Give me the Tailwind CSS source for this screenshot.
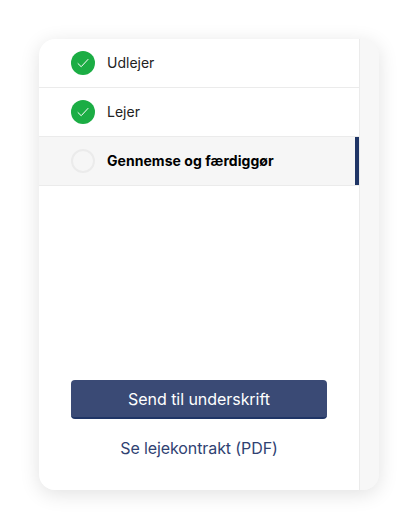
<!DOCTYPE html>
<html lang="en">
<head>
    <meta charset="UTF-8">
    <title>Lejekontrakt</title>
    <script src="https://cdn.jsdelivr.net/npm/@tailwindcss/browser@4"></script>
</head>
<body class="bg-white font-['Inter',sans-serif]">
    <div class="w-[418px] h-[529px] pt-[39px] pl-[39px]">
        <div class="w-[340px] h-[451px] flex rounded-[16px] overflow-hidden bg-[#f7f7f7] shadow-[0_4px_20px_rgba(0,0,0,0.12)]">
            <!-- Main panel -->
            <div class="w-[320px] h-full flex flex-col bg-white">
                <div class="h-[49px] flex items-center pl-[32px] gap-[12px] border-b border-[#ebebeb]">
                    <span class="w-[24px] h-[24px] rounded-full bg-[#1bad44] flex items-center justify-center">
                        <svg class="w-[14px] h-[14px]" viewBox="0 0 14 14" fill="none" stroke="#fff" stroke-width="1" stroke-linecap="round" stroke-linejoin="round"><path d="M2 7.6l3.2 3.1L12 3.4"/></svg>
                    </span>
                    <span class="text-[14px] leading-[20px] text-[#222]">Udlejer</span>
                </div>
                <div class="h-[49px] flex items-center pl-[32px] gap-[12px] border-b border-[#ebebeb]">
                    <span class="w-[24px] h-[24px] rounded-full bg-[#1bad44] flex items-center justify-center">
                        <svg class="w-[14px] h-[14px]" viewBox="0 0 14 14" fill="none" stroke="#fff" stroke-width="1" stroke-linecap="round" stroke-linejoin="round"><path d="M2 7.6l3.2 3.1L12 3.4"/></svg>
                    </span>
                    <span class="text-[14px] leading-[20px] text-[#222]">Lejer</span>
                </div>
                <div class="h-[49px] flex items-center pl-[32px] gap-[12px] border-b border-[#ebebeb] bg-[#f6f6f6] relative">
                    <span class="w-[24px] h-[24px] rounded-full border-2 border-[#ebebeb]"></span>
                    <span class="text-[14px] leading-[20px] font-bold tracking-[0.05px] text-black">Gennemse og færdiggør</span>
                    <span class="absolute right-0 top-0 bottom-0 w-[4px] bg-[#1f3566]"></span>
                </div>
                <div class="flex-1 flex flex-col justify-end px-[32px] pb-[31px]">
                    <button class="w-full h-[39px] rounded-[4px] bg-[#3a4a75] border-b-2 border-[#1f3566] text-white text-[16px] tracking-[-0.05px]">Send til underskrift</button>
                    <a class="mt-[18px] h-[22px] leading-[22px] text-center text-[16px] tracking-[-0.1px] text-[#2f4272]">Se lejekontrakt (PDF)</a>
                </div>
            </div>
            <!-- Right rail -->
            <div class="w-[20px] h-full bg-[#f7f7f7] border-l border-[#ebebeb]"></div>
        </div>
    </div>
</body>
</html>
